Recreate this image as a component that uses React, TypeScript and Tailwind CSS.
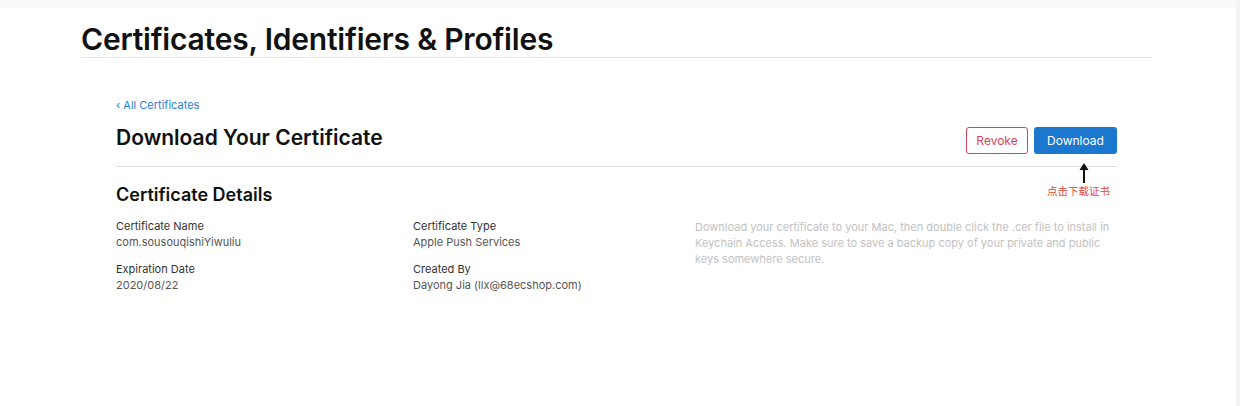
import React from "react";

export default function App() {
  return (
    <div className="w-[1240px] h-[406px] bg-white flex overflow-hidden" style={{ fontFamily: "Inter, 'Noto Sans', 'Noto Sans CJK SC', sans-serif" }}>
      <div className="flex-1 flex flex-col">
        <div className="h-[8px] bg-[#f9f9f9]" />
        <div className="pl-[81px] pr-[84px]">
          <h1 className="text-[30px] leading-[36px] font-semibold text-[#111] tracking-[-0.2px] pt-[13px] border-b border-[#e3e3e3]">
            Certificates, Identifiers &amp; Profiles
          </h1>
          <div className="px-[35px] pt-[39px]">
            <a className="text-[11px] leading-[16px] text-[#2a7fd4] block">‹ All Certificates</a>
            <div className="flex items-start justify-between border-b border-[#e0e0e0] pb-[12px] mt-[9px]">
              <h2 className="text-[21px] leading-[28px] font-semibold text-[#111] mt-[2px]">Download Your Certificate</h2>
              <div className="flex gap-[6px] mt-[5px]">
                <button className="w-[62px] h-[27px] rounded-[3px] border border-[#d6455b] text-[#d6455b] text-[12px] bg-white">Revoke</button>
                <button className="w-[83px] h-[27px] rounded-[3px] bg-[#1c77cf] text-white text-[12px]">Download</button>
              </div>
            </div>
            <div className="flex justify-between">
              <h3 className="text-[18px] leading-[24px] font-semibold text-[#111] mt-[16px]">Certificate Details</h3>
              <div className="relative w-[83px] mr-0 flex flex-col items-center">
                <svg width="12" height="22" viewBox="0 0 12 22" className="mt-[-5px] ml-[16px]">
                  <path d="M6 21V5" stroke="#111" strokeWidth="2" />
                  <path d="M1.5 8L6 1L10.5 8Z" fill="#111" />
                </svg>
                <span className="text-[10.5px] leading-[12px] text-[#e2483c] ml-[6px] mt-[1px]" style={{ fontFamily: "'Noto Sans CJK SC', sans-serif" }}>点击下载证书</span>
              </div>
            </div>
            <div className="flex mt-[11px] text-[11px] leading-[16px]">
              <div className="w-[297px] flex flex-col gap-[11px]">
                <div>
                  <div className="text-[#333]">Certificate Name</div>
                  <div className="text-[#555]">com.sousouqishiYiwuliu</div>
                </div>
                <div>
                  <div className="text-[#333]">Expiration Date</div>
                  <div className="text-[#555]">2020/08/22</div>
                </div>
              </div>
              <div className="w-[282px] flex flex-col gap-[11px]">
                <div>
                  <div className="text-[#333]">Certificate Type</div>
                  <div className="text-[#555]">Apple Push Services</div>
                </div>
                <div>
                  <div className="text-[#333]">Created By</div>
                  <div className="text-[#555]">Dayong Jia (llx@68ecshop.com)</div>
                </div>
              </div>
              <p className="flex-1 text-[#c2c2c2] mt-[1px]">
                Download your certificate to your Mac, then double click the .cer file to install in Keychain Access. Make sure to save a backup copy of your private and public keys somewhere secure.
              </p>
            </div>
          </div>
        </div>
      </div>
      <div className="w-[4px] bg-[#f4f4f4]" />
    </div>
  );
}
